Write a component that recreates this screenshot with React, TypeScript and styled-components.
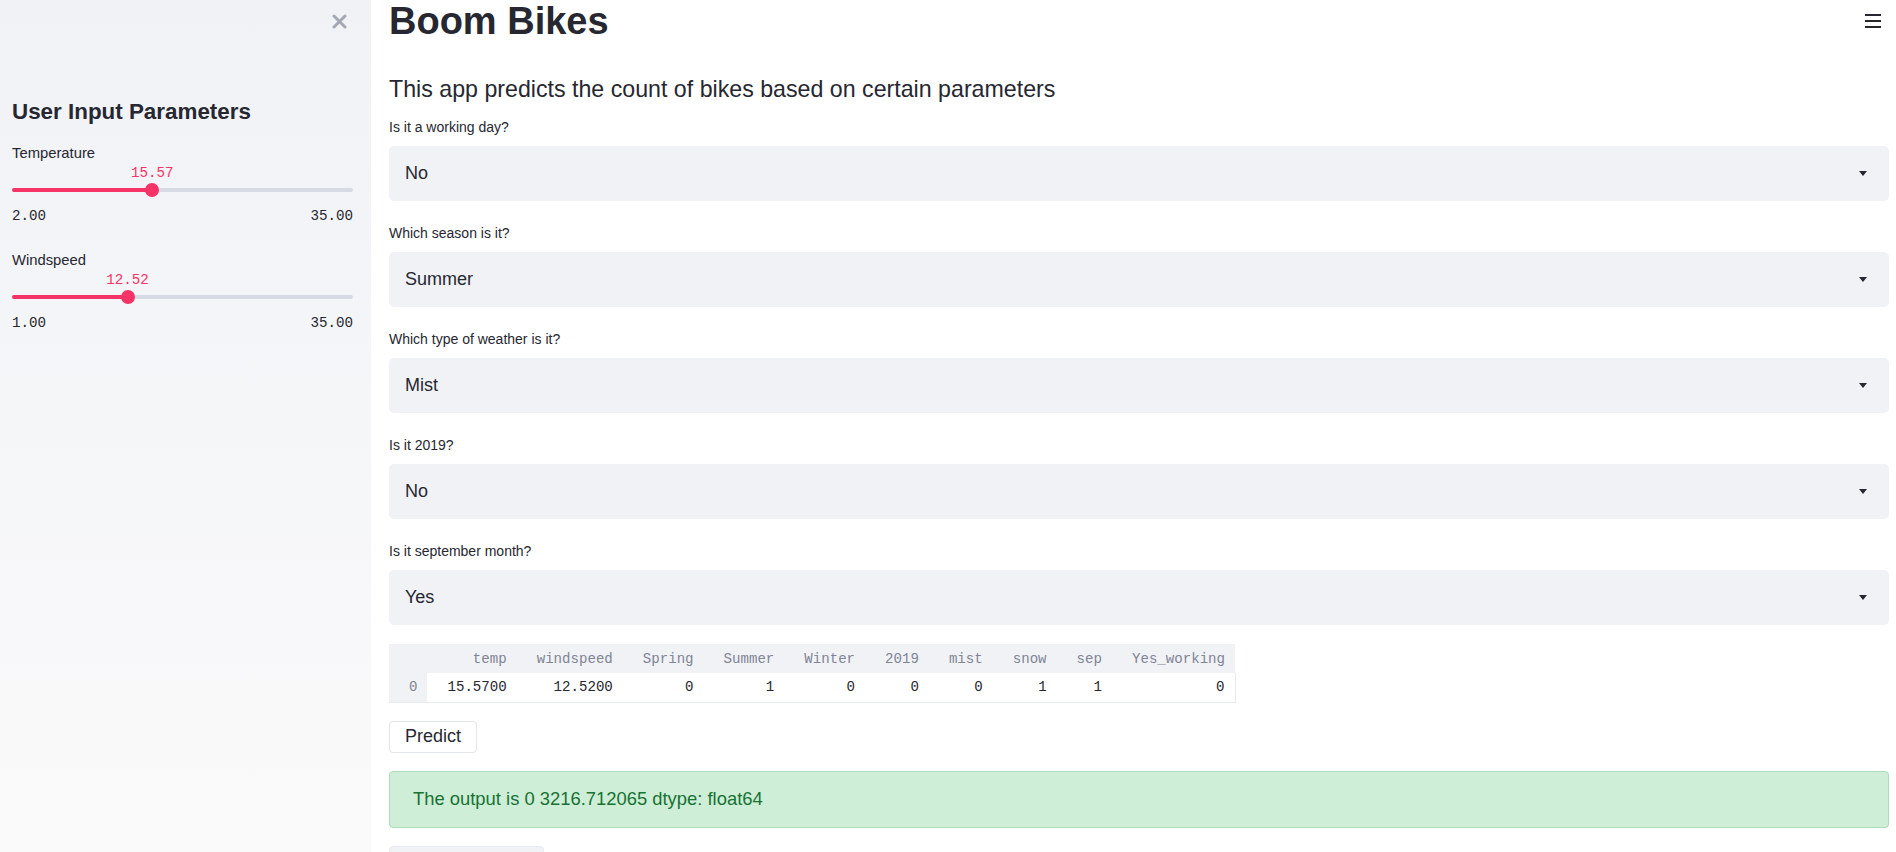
import * as React from 'react';
import styled, { createGlobalStyle } from 'styled-components';

const textColor = '#262730';
const primary = '#f63366';
const mono = "'Liberation Mono', 'DejaVu Sans Mono', monospace";

const GlobalStyle = createGlobalStyle`
  html, body {
    margin: 0;
    padding: 0;
    overflow: hidden;
    background: #fff;
  }

  body {
    font-family: 'Liberation Sans', Arial, sans-serif;
    color: ${textColor};
  }

  * {
    box-sizing: border-box;
  }
`;

const Shell = styled.div`
  display: flex;
  height: 100vh;
  overflow: hidden;
  position: relative;
`;

/* ---------- sidebar ---------- */

const Sidebar = styled.aside`
  flex: 0 0 371px;
  height: 100%;
  background-image: linear-gradient(180deg, #f0f2f6, #fafafa);
  padding: 0 18px 0 12px;
  display: flex;
  flex-direction: column;
`;

const CloseRow = styled.div`
  height: 42px;
  display: flex;
  align-items: center;
  justify-content: flex-end;
  padding-right: 6px;
`;

const SidebarHeading = styled.h2`
  margin: 56px 0 0;
  font-size: 22.4px;
  line-height: 28px;
  font-weight: 700;
  color: ${textColor};
`;

const SliderGroup = styled.div`
  margin-top: 17px;
  display: flex;
  flex-direction: column;
  gap: 24px;
`;

const SliderLabel = styled.div`
  font-size: 14.8px;
  line-height: 20px;
`;

const SliderBody = styled.div`
  position: relative;
  padding-top: 17px;
`;

const SliderValue = styled.div`
  position: absolute;
  top: 0;
  transform: translateX(-50%);
  font-family: ${mono};
  font-size: 14.2px;
  line-height: 20px;
  color: ${primary};
  white-space: nowrap;
`;

const TrackArea = styled.div`
  position: relative;
  height: 20px;
  display: flex;
  align-items: center;
`;

const Track = styled.div`
  width: 100%;
  height: 4px;
  border-radius: 2px;
  background: #d5dae5;
  overflow: hidden;
`;

const TrackFill = styled.div`
  height: 100%;
  background: ${primary};
`;

const Thumb = styled.div`
  position: absolute;
  top: 3px;
  width: 14px;
  height: 14px;
  margin-left: -7px;
  border-radius: 50%;
  background: ${primary};
`;

const MinMax = styled.div`
  margin-top: 6px;
  display: flex;
  justify-content: space-between;
  font-family: ${mono};
  font-size: 14.2px;
  line-height: 20px;
`;

/* ---------- main ---------- */

const Main = styled.main`
  flex: 1;
  min-width: 0;
  padding: 0 7px 0 18px;
  display: flex;
  flex-direction: column;
`;

const MenuButton = styled.div`
  position: absolute;
  top: 14px;
  right: 15px;
  width: 16px;
  height: 14px;
  display: flex;
`;

const Title = styled.h1`
  margin: 0;
  padding-top: 3px;
  font-size: 38px;
  line-height: 37px;
  font-weight: 700;
  color: ${textColor};
`;

const Subtitle = styled.h3`
  margin: 33px 0 0;
  font-size: 23.2px;
  line-height: 32px;
  font-weight: 400;
  color: ${textColor};
`;

const Stack = styled.div`
  margin-top: 12px;
  display: flex;
  flex-direction: column;
  gap: 18px;
`;

const Field = styled.div<{ $tail?: boolean }>`
  display: flex;
  flex-direction: column;
  gap: 9px;
  margin-bottom: ${p => (p.$tail ? 1 : 4)}px;
`;

const FieldLabel = styled.label`
  font-size: 14px;
  line-height: 20px;
  color: ${textColor};
`;

const SelectBox = styled.div`
  height: 55px;
  background: #f0f2f6;
  border-radius: 5px;
  display: flex;
  align-items: center;
  justify-content: space-between;
  padding: 0 22px 0 16px;
  font-size: 18px;
  color: ${textColor};
`;

const DataTable = styled.table`
  align-self: flex-start;
  border-collapse: collapse;
  font-family: ${mono};
  font-size: 14.1px;

  th,
  td {
    height: 29px;
    padding: 0 10px 0 20px;
    text-align: right;
    white-space: pre;
    font-weight: 400;
  }

  thead th {
    background: #f0f2f6;
    color: #808495;
  }

  tbody th {
    background: #f0f2f6;
    color: #808495;
    border-bottom: 1px solid #e6eaf1;
  }

  tbody td {
    color: ${textColor};
    background: #fff;
    border-bottom: 1px solid #e6eaf1;
  }

  tbody td:last-child {
    border-right: 1px solid #e6eaf1;
  }
`;

const PredictButton = styled.button`
  align-self: flex-start;
  height: 32px;
  padding: 0 15px;
  background: #fff;
  border: 1px solid #e2e5ec;
  border-radius: 4px;
  font-family: inherit;
  font-size: 18px;
  color: ${textColor};
`;

const SuccessBox = styled.div`
  height: 57px;
  display: flex;
  align-items: center;
  padding: 0 23px;
  background: #ceeed8;
  border: 1px solid #acdcb9;
  border-radius: 4px;
  font-size: 18.4px;
  color: #177233;
`;

const GhostButton = styled.div`
  width: 155px;
  height: 40px;
  background: #f0f2f6;
  border: 1px solid #e6eaf1;
  border-radius: 4px;
`;

interface SliderProps {
  label: string;
  value: number;
  min: number;
  max: number;
}

const Slider = ({ label, value, min, max }: SliderProps) => {
  const pct = ((value - min) / (max - min)) * 100;
  return (
    <div>
      <SliderLabel>{label}</SliderLabel>
      <SliderBody>
        <SliderValue style={{ left: `${pct}%` }}>{value.toFixed(2)}</SliderValue>
        <TrackArea>
          <Track>
            <TrackFill style={{ width: `${pct}%` }} />
          </Track>
          <Thumb style={{ left: `${pct}%` }} />
        </TrackArea>
      </SliderBody>
      <MinMax>
        <span>{min.toFixed(2)}</span>
        <span>{max.toFixed(2)}</span>
      </MinMax>
    </div>
  );
};

const Caret = () => (
  <svg width="8" height="5" viewBox="0 0 8 5">
    <path d="M0 0h8L4 5z" fill={textColor} />
  </svg>
);

const fields = [
  { label: 'Is it a working day?', value: 'No' },
  { label: 'Which season is it?', value: 'Summer' },
  { label: 'Which type of weather is it?', value: 'Mist' },
  { label: 'Is it 2019?', value: 'No' },
  { label: 'Is it september month?', value: 'Yes' },
];

const columns = ['temp', 'windspeed', 'Spring', 'Summer', 'Winter', '2019', 'mist', 'snow', 'sep', 'Yes_working'];
const row = ['15.5700', '12.5200', '0', '1', '0', '0', '0', '1', '1', '0'];

export default function App() {
  return (
    <Shell>
      <GlobalStyle />
      <Sidebar>
        <CloseRow>
          <svg width="15" height="15" viewBox="0 0 15 15">
            <path d="M2 2L13 13M13 2L2 13" stroke="#a3a8b4" strokeWidth="3" strokeLinecap="round" />
          </svg>
        </CloseRow>
        <SidebarHeading>User Input Parameters</SidebarHeading>
        <SliderGroup>
          <Slider label="Temperature" value={15.57} min={2} max={35} />
          <Slider label="Windspeed" value={12.52} min={1} max={35} />
        </SliderGroup>
      </Sidebar>

      <Main>
        <Title>Boom Bikes</Title>
        <Subtitle>This app predicts the count of bikes based on certain parameters</Subtitle>
        <Stack>
          {fields.map((f, i) => (
            <Field key={f.label} $tail={i === fields.length - 1}>
              <FieldLabel>{f.label}</FieldLabel>
              <SelectBox>
                <span>{f.value}</span>
                <Caret />
              </SelectBox>
            </Field>
          ))}

          <DataTable>
            <thead>
              <tr>
                <th />
                {columns.map(c => (
                  <th key={c}>{c}</th>
                ))}
              </tr>
            </thead>
            <tbody>
              <tr>
                <th>0</th>
                {row.map((v, i) => (
                  <td key={columns[i]}>{v}</td>
                ))}
              </tr>
            </tbody>
          </DataTable>

          <PredictButton>Predict</PredictButton>
          <SuccessBox>The output is 0 3216.712065 dtype: float64</SuccessBox>
          <GhostButton />
        </Stack>
      </Main>

      <MenuButton>
        <svg width="16" height="14" viewBox="0 0 16 14">
          <rect x="0" y="0" width="16" height="2" fill={textColor} />
          <rect x="0" y="6" width="16" height="2" fill={textColor} />
          <rect x="0" y="12" width="16" height="2" fill={textColor} />
        </svg>
      </MenuButton>
    </Shell>
  );
}
